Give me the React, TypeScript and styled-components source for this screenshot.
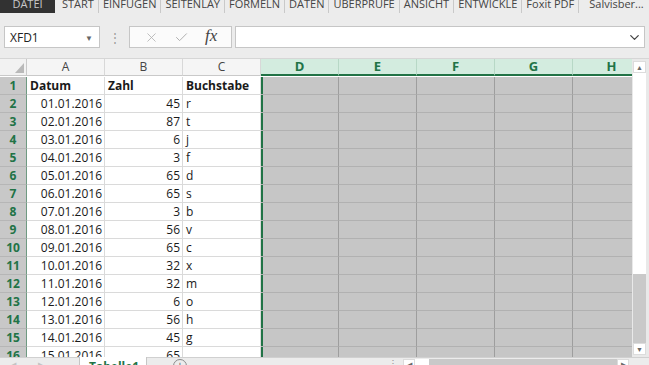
import React from "react";
import styled, { createGlobalStyle } from "styled-components";
import { X, Check, ChevronDown } from "lucide-react";

const GlobalStyle = createGlobalStyle`
  html, body {
    margin: 0;
    padding: 0;
    background: #ececec;
  }
  * {
    box-sizing: border-box;
  }
`;

const GREEN = "#217346";

const Window = styled.div`
  width: 649px;
  height: 365px;
  overflow: hidden;
  display: flex;
  flex-direction: column;
  background: #ececec;
  font-family: "Open Sans", "Noto Sans", sans-serif;
  color: #222;
`;

const RibbonTabs = styled.div`
  flex-shrink: 0;
  height: 13px;
  display: flex;
  align-items: flex-start;
  overflow: hidden;
  font-size: 11px;
`;

const RibbonTab = styled.div<{ $file?: boolean; $last?: boolean }>`
  flex-shrink: 0;
  height: 16px;
  line-height: 13px;
  margin-top: -3px;
  padding: 0 ${(p) => (p.$file ? "0" : "4px")};
  white-space: nowrap;
  text-align: center;
  background: ${(p) => (p.$file ? "#323232" : "transparent")};
  color: ${(p) => (p.$file ? "#c8c8c8" : "#444")};
  border-right: ${(p) => (p.$file || p.$last ? "none" : "1px solid #c9c9c9")};
  width: ${(p) => (p.$file ? "55px" : "auto")};
  margin-left: ${(p) => (p.$last ? "6px" : "0")};
  margin-right: ${(p) => (p.$file ? "3px" : "0")};
`;

const TabCaret = styled.span`
  margin-left: 8px;
  font-size: 8px;
  color: #888;
`;

const FormulaBar = styled.div`
  flex-shrink: 0;
  margin-top: 13px;
  height: 22px;
  display: flex;
  align-items: stretch;
  padding-left: 4px;
`;

const NameBox = styled.div`
  width: 96px;
  background: #fff;
  border: 1px solid #c6c6c6;
  display: flex;
  align-items: center;
  justify-content: space-between;
  padding: 0 6px 0 5px;
  font-size: 12px;
  color: #222;
`;

const SmallCaret = styled.span`
  font-size: 8px;
  color: #666;
`;

const Dots = styled.div`
  width: 29px;
  display: flex;
  align-items: center;
  justify-content: center;
  color: #9a9a9a;
  font-size: 12px;
`;

const FxBox = styled.div`
  width: 103px;
  background: #fbfbfb;
  border: 1px solid #c6c6c6;
  display: flex;
  align-items: center;
  justify-content: space-around;
  padding: 0 6px;
  color: #b0b0b0;
`;

const FxLabel = styled.span`
  font-family: "Liberation Serif", "DejaVu Serif", serif;
  font-style: italic;
  font-size: 17px;
  color: #444;
  margin-top: -2px;
`;

const FormulaInput = styled.div`
  flex: 1;
  margin: 0 4px 0 3px;
  background: #fff;
  border: 1px solid #c6c6c6;
  display: flex;
  align-items: center;
  justify-content: flex-end;
  padding-right: 2px;
  color: #444;
`;

const GridArea = styled.div`
  flex-shrink: 0;
  margin-top: 10px;
  height: 299px;
  display: flex;
  overflow: hidden;
  border-top: 1px solid #d6d6d6;
`;

const Sheet = styled.div`
  width: 632px;
  overflow: hidden;
  background: #fff;
`;

const Grid = styled.div`
  display: grid;
  grid-template-columns: 27px repeat(8, 78px);
  grid-auto-rows: 18px;
  width: max-content;
`;

const Corner = styled.div`
  height: 17px;
  background: #f2f2f2;
  border-right: 1px solid #c9c9c9;
  border-bottom: 1px solid #c9c9c9;
  display: flex;
  align-items: flex-end;
  justify-content: flex-end;
  padding: 0 2px 2px 0;
`;

const ColHeader = styled.div<{ $sel?: boolean }>`
  height: 17px;
  font-size: ${(p) => (p.$sel ? "13px" : "12px")};
  font-weight: ${(p) => (p.$sel ? 700 : 400)};
  color: ${(p) => (p.$sel ? GREEN : "#444")};
  background: ${(p) => (p.$sel ? "#d3ecdf" : "#f5f5f5")};
  border-right: 1px solid ${(p) => (p.$sel ? "#b7d8c6" : "#d8d8d8")};
  border-bottom: ${(p) => (p.$sel ? `2px solid ${GREEN}` : "1px solid #c9c9c9")};
  text-align: center;
  line-height: 15px;
`;

const RowHeader = styled.div`
  background: #c8c8c8;
  color: ${GREEN};
  font-weight: 700;
  font-size: 12px;
  text-align: center;
  line-height: 18px;
  border-bottom: 1px solid #b6b6b6;
  border-right: 1px solid #6f9a82;
`;

const Cell = styled.div<{ $align?: "left" | "right"; $bold?: boolean; $sel?: boolean; $edge?: boolean }>`
  font-size: 12px;
  line-height: 18px;
  white-space: nowrap;
  overflow: hidden;
  color: #1a1a1a;
  font-weight: ${(p) => (p.$bold ? 700 : 400)};
  text-align: ${(p) => p.$align ?? "left"};
  padding: ${(p) => (p.$align === "right" ? "0 2px 0 0" : "0 0 0 3px")};
  background: ${(p) => (p.$sel ? "#c6c6c6" : "#fff")};
  border-right: 1px solid ${(p) => (p.$sel ? "#9e9e9e" : "#dadada")};
  border-bottom: 1px solid ${(p) => (p.$sel ? "#b1b1b1" : "#dadada")};
  box-shadow: ${(p) => (p.$edge ? `inset 2px 0 0 ${GREEN}` : "none")};
`;

const VScroll = styled.div`
  width: 17px;
  background: #e9e9e9;
  display: flex;
  flex-direction: column;
  padding: 2px 3px 2px 1px;
`;

const ArrowBox = styled.div`
  height: 12px;
  flex-shrink: 0;
  background: #fff;
  border: 1px solid #dcdcdc;
  display: flex;
  align-items: center;
  justify-content: center;
  font-size: 7px;
  color: #6a6a6a;
`;

const Thumb = styled.div<{ $size: number }>`
  flex: 0 0 ${(p) => p.$size}px;
  background: #fff;
`;

const Track = styled.div`
  flex: 1;
  background: #c9c9c9;
`;

const SheetBar = styled.div`
  flex-shrink: 0;
  height: 22px;
  display: flex;
  align-items: stretch;
  background: #ececec;
  border-top: 1px solid #d0d0d0;
  font-size: 12px;
`;

const NavArrows = styled.div`
  width: 79px;
  display: flex;
  gap: 22px;
  padding: 3px 0 0 11px;
  color: #c4c4c4;
  font-size: 7px;
  line-height: 8px;
`;

const SheetTab = styled.div`
  width: 68px;
  background: #fff;
  border-left: 1px solid #c6c6c6;
  border-right: 1px solid #c6c6c6;
  color: ${GREEN};
  font-weight: 700;
  padding: 0 0 0 9px;
  line-height: 20px;
  margin-top: -1px;
`;

const AddSheet = styled.div`
  width: 14px;
  height: 14px;
  margin: 1px 0 0 26px;
  border: 1px solid #8a8a8a;
  border-radius: 50%;
  color: #6a6a6a;
  font-size: 12px;
  line-height: 11px;
  text-align: center;
`;

const Splitter = styled.div`
  margin-left: 201px;
  width: 15px;
  color: #999;
  font-size: 10px;
  line-height: 10px;
`;

const HScroll = styled.div`
  width: 226px;
  display: flex;
  padding-top: 1px;
`;

const HArrow = styled.div`
  width: 12px;
  height: 12px;
  background: #fff;
  border: 1px solid #dcdcdc;
  font-size: 7px;
  color: #6a6a6a;
  text-align: center;
  line-height: 10px;
`;

const HThumb = styled.div`
  width: 14px;
  background: #fff;
`;

const HTrack = styled.div`
  flex: 1;
  background: #c9c9c9;
`;

const tabs = [
  "START",
  "EINFÜGEN",
  "SEITENLAY",
  "FORMELN",
  "DATEN",
  "ÜBERPRÜFE",
  "ANSICHT",
  "ENTWICKLE",
  "Foxit PDF",
];

const numbers = [45, 87, 6, 3, 65, 65, 3, 56, 65, 32, 32, 6, 56, 45, 65];
const letters = ["r", "t", "j", "f", "d", "s", "b", "v", "c", "x", "m", "o", "h", "g", ""];
const selectedCols = ["D", "E", "F", "G", "H"];
const allCols = ["A", "B", "C", "D", "E", "F", "G", "H"];

function SelectAllCorner() {
  return (
    <Corner>
      <svg width="9" height="10" viewBox="0 0 9 10">
        <polygon points="9,0 9,10 0,10" fill="#b9b9b9" />
      </svg>
    </Corner>
  );
}

function SelectedCells() {
  return (
    <>
      {selectedCols.map((c, i) => (
        <Cell key={c} $sel $edge={i === 0} />
      ))}
    </>
  );
}

export default function App() {
  const rows = numbers.map((n, i) => ({
    date: `${String(i + 1).padStart(2, "0")}.01.2016`,
    num: n,
    letter: letters[i],
  }));

  return (
    <>
      <GlobalStyle />
      <Window>
        <RibbonTabs>
          <RibbonTab $file>DATEI</RibbonTab>
          {tabs.map((t) => (
            <RibbonTab key={t}>{t}</RibbonTab>
          ))}
          <RibbonTab $last>
            Salvisber...
            <TabCaret>▾</TabCaret>
          </RibbonTab>
        </RibbonTabs>

        <FormulaBar>
          <NameBox>
            XFD1
            <SmallCaret>▼</SmallCaret>
          </NameBox>
          <Dots>⋮</Dots>
          <FxBox>
            <X size={15} strokeWidth={1.3} />
            <Check size={15} strokeWidth={1.6} />
            <FxLabel>fx</FxLabel>
          </FxBox>
          <FormulaInput>
            <ChevronDown size={15} strokeWidth={2} />
          </FormulaInput>
        </FormulaBar>

        <GridArea>
          <Sheet>
            <Grid>
              <SelectAllCorner />
              {allCols.map((c) => (
                <ColHeader key={c} $sel={selectedCols.includes(c)}>
                  {c}
                </ColHeader>
              ))}

              <RowHeader>1</RowHeader>
              <Cell $bold>Datum</Cell>
              <Cell $bold>Zahl</Cell>
              <Cell $bold>Buchstabe</Cell>
              <SelectedCells />

              {rows.map((r, i) => (
                <React.Fragment key={r.date}>
                  <RowHeader>{i + 2}</RowHeader>
                  <Cell $align="right">{r.date}</Cell>
                  <Cell $align="right">{r.num}</Cell>
                  <Cell>{r.letter}</Cell>
                  <SelectedCells />
                </React.Fragment>
              ))}
            </Grid>
          </Sheet>
          <VScroll>
            <ArrowBox>▲</ArrowBox>
            <Thumb $size={201} />
            <Track />
            <ArrowBox>▼</ArrowBox>
          </VScroll>
        </GridArea>

        <SheetBar>
          <NavArrows>
            <span>◀</span>
            <span>▶</span>
          </NavArrows>
          <SheetTab>Tabelle1</SheetTab>
          <AddSheet>+</AddSheet>
          <Splitter>⋮</Splitter>
          <HScroll>
            <HArrow>◀</HArrow>
            <HThumb />
            <HTrack />
            <HArrow>▶</HArrow>
          </HScroll>
        </SheetBar>
      </Window>
    </>
  );
}
